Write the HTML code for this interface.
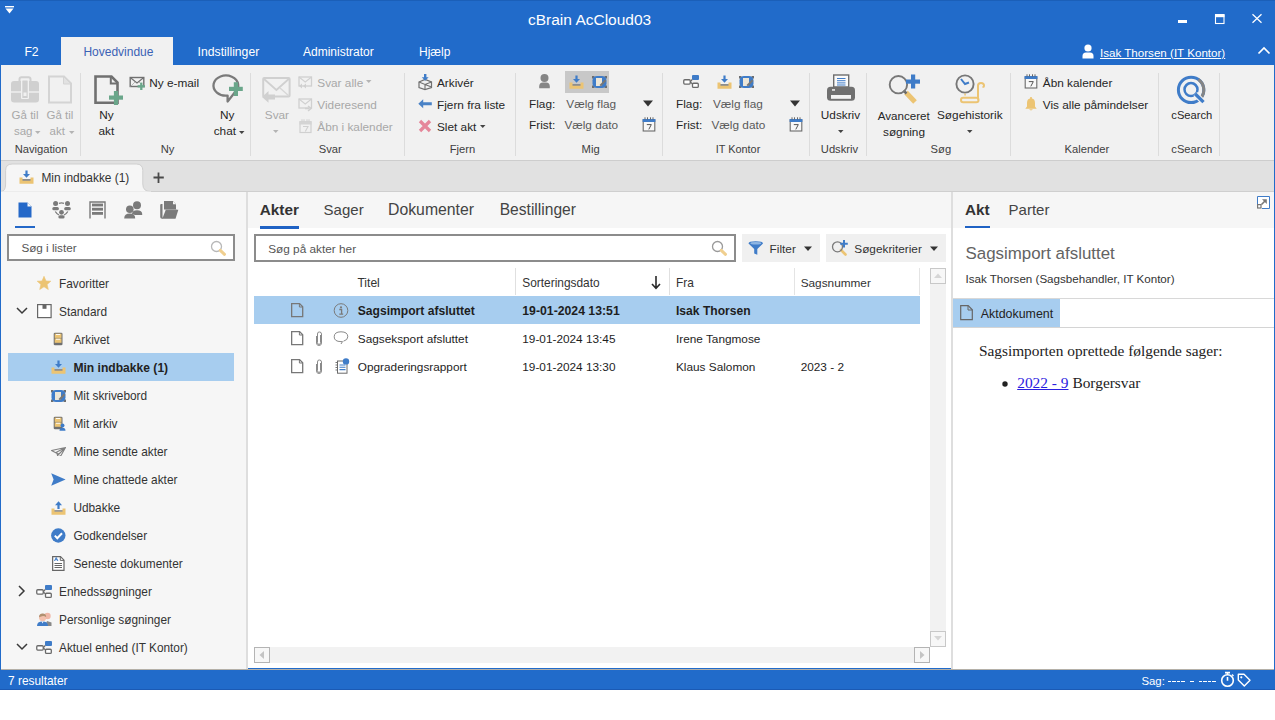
<!DOCTYPE html>
<html><head><meta charset="utf-8"><style>
html,body{margin:0;padding:0;width:1275px;height:720px;overflow:hidden;background:#fff;}
body{position:relative;font-family:"Liberation Sans", sans-serif;}
.a{position:absolute;}
.t{white-space:nowrap;line-height:normal;}
svg.a{overflow:visible;}
</style></head><body>
<div class="a" style="left:0px;top:0px;width:1275px;height:720px;background:#ffffff;"></div>
<div class="a" style="left:0px;top:0px;width:1275px;height:690px;background:#216bca;"></div>
<div class="a" style="left:0px;top:0px;width:1275px;height:1px;background:#1b5fb8;"></div>
<svg class="a" style="left:5px;top:6px;" width="9" height="8" viewBox="0 0 9 8"><rect x="0" y="0" width="9" height="1.4" fill="#fff"/><path d="M0.5 2.6 L8.5 2.6 L4.5 7.5 Z" fill="#fff"/></svg>
<div class="a t" style="left:528px;top:11px;font-size:15.5px;color:#ffffff;font-family:'Liberation Sans', sans-serif;">cBrain AcCloud03</div>
<div class="a" style="left:1178px;top:20px;width:9px;height:3px;background:#fff;"></div>
<svg class="a" style="left:1214px;top:13px;" width="11" height="11" viewBox="0 0 11 11"><rect x="1.5" y="2" width="8.5" height="8.5" fill="none" stroke="#fff" stroke-width="1.1"/><rect x="1" y="1" width="9.5" height="3.2" fill="#fff"/></svg>
<svg class="a" style="left:1251px;top:13px;" width="12" height="11" viewBox="0 0 12 11"><path d="M1.5 1.2 L10.5 9.8 M10.5 1.2 L1.5 9.8" stroke="#fff" stroke-width="1.25"/></svg>
<div class="a t" style="left:24.4px;top:45px;font-size:12.2px;color:#ffffff;font-family:'Liberation Sans', sans-serif;">F2</div>
<div class="a" style="left:61px;top:37px;width:112px;height:28px;background:#f1f1f1;"></div>
<div class="a t" style="left:83.4px;top:45px;font-size:12px;color:#3b62b5;font-family:'Liberation Sans', sans-serif;">Hovedvindue</div>
<div class="a t" style="left:197.6px;top:45px;font-size:12.2px;color:#ffffff;font-family:'Liberation Sans', sans-serif;">Indstillinger</div>
<div class="a t" style="left:303px;top:45px;font-size:12px;color:#ffffff;font-family:'Liberation Sans', sans-serif;">Administrator</div>
<div class="a t" style="left:419px;top:45px;font-size:12px;color:#ffffff;font-family:'Liberation Sans', sans-serif;">Hjælp</div>
<svg class="a" style="left:1082px;top:44px;" width="12" height="15" viewBox="0 0 12 15"><circle cx="6" cy="4" r="3.6" fill="#fff"/><path d="M0.5 14.5 L0.5 12 Q0.5 8.5 4 8.5 L8 8.5 Q11.5 8.5 11.5 12 L11.5 14.5 Z" fill="#fff"/></svg>
<div class="a t" style="left:1100px;top:46px;font-size:11.6px;color:#ffffff;font-family:'Liberation Sans', sans-serif;text-decoration:underline;text-underline-offset:1px;">Isak Thorsen (IT Kontor)</div>
<svg class="a" style="left:1257px;top:46px;" width="14" height="9" viewBox="0 0 14 9"><path d="M1.5 7.5 L7 2 L12.5 7.5" fill="none" stroke="#fff" stroke-width="1.7"/></svg>
<div class="a" style="left:1px;top:65px;width:1273px;height:95px;background:#f1f1f1;"></div>
<div class="a" style="left:1px;top:160px;width:1273px;height:1px;background:#cdcdcd;"></div>
<div class="a" style="left:80px;top:73px;width:1px;height:83px;background:#dcdcdc;"></div>
<div class="a" style="left:250px;top:73px;width:1px;height:83px;background:#dcdcdc;"></div>
<div class="a" style="left:404px;top:73px;width:1px;height:83px;background:#dcdcdc;"></div>
<div class="a" style="left:515px;top:73px;width:1px;height:83px;background:#dcdcdc;"></div>
<div class="a" style="left:662px;top:73px;width:1px;height:83px;background:#dcdcdc;"></div>
<div class="a" style="left:809px;top:73px;width:1px;height:83px;background:#dcdcdc;"></div>
<div class="a" style="left:866px;top:73px;width:1px;height:83px;background:#dcdcdc;"></div>
<div class="a" style="left:1010px;top:73px;width:1px;height:83px;background:#dcdcdc;"></div>
<div class="a" style="left:1158px;top:73px;width:1px;height:83px;background:#dcdcdc;"></div>
<div class="a" style="left:1219px;top:73px;width:1px;height:83px;background:#dcdcdc;"></div>
<svg class="a" style="left:10px;top:76px;" width="30" height="28" viewBox="0 0 30 28"><rect x="1" y="5" width="28" height="21.5" rx="3" fill="#d0d0d0"/><rect x="9.5" y="1.2" width="11" height="6" rx="2" fill="none" stroke="#d0d0d0" stroke-width="2"/><rect x="1" y="15.3" width="28" height="1.4" fill="#f1f1f1"/><rect x="11" y="3.5" width="8" height="19.5" rx="1" fill="#f1f1f1"/><rect x="12.3" y="4.5" width="5.4" height="17.5" rx="0.5" fill="#d0d0d0"/><rect x="13.5" y="16.5" width="3" height="3.5" fill="#f1f1f1"/></svg>
<svg class="a" style="left:47px;top:75px;" width="26" height="29" viewBox="0 0 26 29"><path d="M2 1.5 L17 1.5 L24 8.5 L24 27.5 L2 27.5 Z" fill="none" stroke="#d4d4d4" stroke-width="2"/><path d="M16.5 1.5 L16.5 9 L24 9 Z" fill="#e2e2e2" stroke="#d4d4d4" stroke-width="1"/></svg>
<div class="a t" style="left:11.6px;top:109px;font-size:11.5px;color:#a8a8a8;font-family:'Liberation Sans', sans-serif;">Gå til</div>
<div class="a t" style="left:13.9px;top:125px;font-size:11.5px;color:#a8a8a8;font-family:'Liberation Sans', sans-serif;">sag</div>
<svg class="a" style="left:34.5px;top:131px;" width="6" height="4" viewBox="0 0 6 4"><path d="M0 0 L5.5 0 L2.75 3 Z" fill="#b4b4b4"/></svg>
<div class="a t" style="left:46.5px;top:109px;font-size:11.5px;color:#a8a8a8;font-family:'Liberation Sans', sans-serif;">Gå til</div>
<div class="a t" style="left:49.5px;top:125px;font-size:11.5px;color:#a8a8a8;font-family:'Liberation Sans', sans-serif;">akt</div>
<svg class="a" style="left:68.5px;top:131px;" width="6" height="4" viewBox="0 0 6 4"><path d="M0 0 L5.5 0 L2.75 3 Z" fill="#b4b4b4"/></svg>
<div class="a t" style="left:14.7px;top:143px;font-size:11.2px;color:#404040;font-family:'Liberation Sans', sans-serif;">Navigation</div>
<svg class="a" style="left:94px;top:75px;" width="30" height="31" viewBox="0 0 30 31"><path d="M1.5 1.5 L17.5 1.5 L23.5 7.5 L23.5 27.7 L1.5 27.7 Z" fill="none" stroke="#707070" stroke-width="2.6"/><path d="M16.8 1.5 L16.8 8.5 L23.5 8.5" fill="none" stroke="#707070" stroke-width="2"/><rect x="15" y="20.5" width="14" height="4.2" fill="#6aa68a"/><rect x="19.9" y="16" width="4.2" height="14" fill="#6aa68a"/></svg>
<div class="a t" style="left:99.3px;top:108px;font-size:11.8px;color:#262626;font-family:'Liberation Sans', sans-serif;">Ny</div>
<div class="a t" style="left:98.5px;top:124px;font-size:11.8px;color:#262626;font-family:'Liberation Sans', sans-serif;">akt</div>
<svg class="a" style="left:129px;top:76px;" width="17" height="14" viewBox="0 0 17 14"><rect x="1.2" y="1.5" width="13.6" height="9" fill="none" stroke="#707070" stroke-width="1.4"/><path d="M1.2 1.5 L8 7 L14.8 1.5" fill="none" stroke="#707070" stroke-width="1.1"/><path d="M1.5 10.5 L6 6 M14.5 10.5 L10 6" stroke="#aaa" stroke-width="0.8"/><rect x="8.6" y="9.2" width="7.4" height="2.3" fill="#6aa68a"/><rect x="11.15" y="6.6" width="2.3" height="7.4" fill="#6aa68a"/></svg>
<div class="a t" style="left:149.3px;top:76px;font-size:11.8px;color:#262626;font-family:'Liberation Sans', sans-serif;">Ny e-mail</div>
<svg class="a" style="left:212px;top:74px;" width="32" height="29" viewBox="0 0 32 29"><path d="M22.3 19 A12.4 10.1 0 1 0 15.6 21.6 L15.6 27.6 Z" fill="none" stroke="#7a7a7a" stroke-width="2.3" stroke-linejoin="round"/><rect x="17" y="12.8" width="13.8" height="4.2" fill="#6aa68a"/><rect x="21.8" y="8.2" width="4.2" height="13.8" fill="#6aa68a"/></svg>
<div class="a t" style="left:220px;top:108px;font-size:11.8px;color:#262626;font-family:'Liberation Sans', sans-serif;">Ny</div>
<div class="a t" style="left:213.7px;top:124px;font-size:11.8px;color:#262626;font-family:'Liberation Sans', sans-serif;">chat</div>
<svg class="a" style="left:238.5px;top:131px;" width="6" height="4" viewBox="0 0 6 4"><path d="M0 0 L5.5 0 L2.75 3 Z" fill="#444"/></svg>
<div class="a t" style="left:160.7px;top:143px;font-size:11.2px;color:#404040;font-family:'Liberation Sans', sans-serif;">Ny</div>
<svg class="a" style="left:261px;top:76px;" width="31" height="28" viewBox="0 0 31 28"><rect x="2.2" y="2" width="26.4" height="18.4" rx="1" fill="none" stroke="#d0d0d0" stroke-width="2"/><path d="M2.5 2.5 L15.4 14 L28.3 2.5" fill="none" stroke="#d0d0d0" stroke-width="1.8"/><path d="M28 20 L19 12" stroke="#d6d6d6" stroke-width="1.3"/><path d="M1 21 L7.5 15 L7.5 18.5 L14 18.5 L14 23.5 L7.5 23.5 L7.5 26.8 Z" fill="#d0d0d0"/></svg>
<div class="a t" style="left:264.8px;top:108px;font-size:11.8px;color:#a8a8a8;font-family:'Liberation Sans', sans-serif;">Svar</div>
<svg class="a" style="left:273px;top:130px;" width="6" height="4" viewBox="0 0 6 4"><path d="M0 0 L5.5 0 L2.75 3 Z" fill="#b4b4b4"/></svg>
<svg class="a" style="left:298px;top:76px;" width="14" height="14" viewBox="0 0 14 14"><rect x="1" y="1" width="12.5" height="9" fill="none" stroke="#d0d0d0" stroke-width="1.3"/><path d="M1 1 L7.25 6 L13.5 1" fill="none" stroke="#d0d0d0" stroke-width="1.1"/><path d="M1 10 L4 7.5 L4 12.5 Z M5 10 L8 7.5 L8 12.5Z" fill="#d0d0d0"/></svg>
<div class="a t" style="left:317.3px;top:76px;font-size:11.8px;color:#a8a8a8;font-family:'Liberation Sans', sans-serif;">Svar alle</div>
<svg class="a" style="left:365.5px;top:80px;" width="6" height="4" viewBox="0 0 6 4"><path d="M0 0 L5.5 0 L2.75 3 Z" fill="#b4b4b4"/></svg>
<svg class="a" style="left:298px;top:98px;" width="14" height="14" viewBox="0 0 14 14"><rect x="1" y="1" width="12.5" height="9" fill="none" stroke="#d0d0d0" stroke-width="1.3"/><path d="M1 1 L7.25 6 L13.5 1" fill="none" stroke="#d0d0d0" stroke-width="1.1"/><path d="M7 10.5 L11 10.5 M10 8 L13 10.5 L10 13" fill="none" stroke="#d0d0d0" stroke-width="1.5"/></svg>
<div class="a t" style="left:317.3px;top:98px;font-size:11.8px;color:#a8a8a8;font-family:'Liberation Sans', sans-serif;">Videresend</div>
<svg class="a" style="left:299px;top:119px;" width="13" height="14" viewBox="0 0 13 14"><rect x="1" y="3" width="11" height="10.5" fill="none" stroke="#d0d0d0" stroke-width="1.2"/><rect x="0.5" y="2" width="12" height="3.5" fill="#d4d4d4"/><path d="M3 0.3 L3 2.8 M5 0.3 L5 2.8 M8 0.3 L8 2.8 M10 0.3 L10 2.8" stroke="#d0d0d0" stroke-width="1.1"/><path d="M4 7.5 L9 7.5 L6.3 12.5" fill="none" stroke="#d0d0d0" stroke-width="1.1"/></svg>
<div class="a t" style="left:317.3px;top:120px;font-size:11.8px;color:#a8a8a8;font-family:'Liberation Sans', sans-serif;">Åbn i kalender</div>
<div class="a t" style="left:318.8px;top:143px;font-size:11.2px;color:#404040;font-family:'Liberation Sans', sans-serif;">Svar</div>
<svg class="a" style="left:418px;top:74px;" width="15" height="16" viewBox="0 0 15 16"><path d="M1 8 L7 5.5 L13.5 8 L13.5 13.5 L7 15.5 L1 13.5 Z" fill="none" stroke="#707070" stroke-width="1.2"/><path d="M1 8 L7 10.5 L13.5 8 M7 10.5 L7 15.5 M7 10.5 L13.5 13" fill="none" stroke="#707070" stroke-width="1.1"/><rect x="6" y="0" width="2.4" height="4.5" fill="#3f7cc8"/><path d="M3.8 3.2 L10.6 3.2 L7.2 6.8 Z" fill="#3f7cc8"/></svg>
<div class="a t" style="left:437px;top:76px;font-size:11.8px;color:#262626;font-family:'Liberation Sans', sans-serif;">Arkivér</div>
<svg class="a" style="left:418px;top:99px;" width="14" height="10" viewBox="0 0 14 10"><path d="M0.3 4.7 L5.2 0.2 L5.2 3.2 L13.8 3.2 L13.8 6.3 L5.2 6.3 L5.2 9.3 Z" fill="#4a82c6"/></svg>
<div class="a t" style="left:437px;top:98px;font-size:11.8px;color:#262626;font-family:'Liberation Sans', sans-serif;">Fjern fra liste</div>
<svg class="a" style="left:418px;top:119px;" width="14" height="14" viewBox="0 0 14 14"><path d="M2 2 L12 12 M12 2 L2 12" stroke="#e5879a" stroke-width="3.3"/></svg>
<div class="a t" style="left:437px;top:120px;font-size:11.8px;color:#262626;font-family:'Liberation Sans', sans-serif;">Slet akt</div>
<svg class="a" style="left:480px;top:125px;" width="6" height="4" viewBox="0 0 6 4"><path d="M0 0 L5.5 0 L2.75 3 Z" fill="#444"/></svg>
<div class="a t" style="left:449.7px;top:143px;font-size:11.2px;color:#404040;font-family:'Liberation Sans', sans-serif;">Fjern</div>
<svg class="a" style="left:539px;top:74px;" width="11" height="15" viewBox="0 0 11 15"><circle cx="5.5" cy="4.1" r="4" fill="#858585"/><path d="M0.2 14.2 L0.2 12.5 Q0.2 8.6 4 8.6 L7 8.6 Q10.8 8.6 10.8 12.5 L10.8 14.2 Z" fill="#858585"/></svg>
<div class="a" style="left:565px;top:71px;width:44px;height:22px;background:#c8c8c8;"></div>
<svg class="a" style="left:569px;top:75px;" width="15" height="14" viewBox="0 0 15 14"><path d="M0.5 7.5 L3.5 7.5 L3.5 9 L11.5 9 L11.5 7.5 L14.5 7.5 L14.5 13.8 L0.5 13.8 Z" fill="#ecc473"/><rect x="3.5" y="9" width="8" height="1.8" fill="#8e8e8e"/><rect x="6.4" y="0.5" width="2.2" height="5" fill="#3f7cc8"/><path d="M4 4 L11 4 L7.5 7.8 Z" fill="#3f7cc8"/></svg>
<svg class="a" style="left:592px;top:75px;" width="15" height="14" viewBox="0 0 15 14"><rect x="0" y="1" width="2.5" height="2.5" fill="#6e6e6e"/><rect x="12.5" y="1" width="2.5" height="2.5" fill="#6e6e6e"/><rect x="0" y="10.5" width="2.5" height="2.5" fill="#6e6e6e"/><rect x="12.5" y="10.5" width="2.5" height="2.5" fill="#6e6e6e"/><rect x="0.5" y="1" width="14" height="12" rx="4.5" fill="#3f7cc8"/><rect x="4" y="3" width="6" height="8" fill="#ece6d8"/><path d="M8.3 10.8 L13.6 5.2" stroke="#777" stroke-width="2"/></svg>
<div class="a t" style="left:529px;top:97px;font-size:11.8px;color:#262626;font-family:'Liberation Sans', sans-serif;">Flag:</div>
<div class="a t" style="left:566.3px;top:97px;font-size:11.8px;color:#595959;font-family:'Liberation Sans', sans-serif;">Vælg flag</div>
<svg class="a" style="left:643px;top:100px;" width="10" height="7" viewBox="0 0 10 7"><path d="M0 0.5 L10 0.5 L5 6.5 Z" fill="#333"/></svg>
<div class="a t" style="left:529px;top:118px;font-size:11.8px;color:#262626;font-family:'Liberation Sans', sans-serif;">Frist:</div>
<div class="a t" style="left:564.4px;top:118px;font-size:11.8px;color:#595959;font-family:'Liberation Sans', sans-serif;">Vælg dato</div>
<svg class="a" style="left:642px;top:117px;" width="14" height="15" viewBox="0 0 14 15"><rect x="1.2" y="3" width="11.6" height="11" fill="#f8f8f8" stroke="#6b6b6b" stroke-width="1.1"/><rect x="0.6" y="2" width="12.8" height="3" fill="#3f7cc8"/><path d="M3 0.3 L3 2.6 M5.5 0.3 L5.5 2.6 M8.5 0.3 L8.5 2.6 M11 0.3 L11 2.6" stroke="#666" stroke-width="1"/><path d="M4.8 7.6 L9.3 7.6 L6.8 12.4" fill="none" stroke="#555" stroke-width="1"/></svg>
<div class="a t" style="left:581.6px;top:143px;font-size:11.2px;color:#404040;font-family:'Liberation Sans', sans-serif;">Mig</div>
<svg class="a" style="left:683px;top:75px;" width="16" height="13" viewBox="0 0 16 13"><rect x="0.75" y="4.75" width="6.5" height="4.3" rx="1" fill="#fff" stroke="#6a6a6a" stroke-width="1.3"/><rect x="9" y="0" width="7" height="5" rx="1" fill="#3f7cc8"/><rect x="9.5" y="8.25" width="5.8" height="4.2" rx="1" fill="#fff" stroke="#6a6a6a" stroke-width="1.3"/><path d="M7.3 6.9 L9.3 4.3 M7.3 6.9 L9.8 9.3" stroke="#6a6a6a" stroke-width="1.2"/></svg>
<svg class="a" style="left:717px;top:75px;" width="15" height="14" viewBox="0 0 15 14"><path d="M0.5 7.5 L3.5 7.5 L3.5 9 L11.5 9 L11.5 7.5 L14.5 7.5 L14.5 13.8 L0.5 13.8 Z" fill="#ecc473"/><rect x="3.5" y="9" width="8" height="1.8" fill="#8e8e8e"/><rect x="6.4" y="0.5" width="2.2" height="5" fill="#3f7cc8"/><path d="M4 4 L11 4 L7.5 7.8 Z" fill="#3f7cc8"/></svg>
<svg class="a" style="left:739px;top:75px;" width="15" height="14" viewBox="0 0 15 14"><rect x="0" y="1" width="2.5" height="2.5" fill="#6e6e6e"/><rect x="12.5" y="1" width="2.5" height="2.5" fill="#6e6e6e"/><rect x="0" y="10.5" width="2.5" height="2.5" fill="#6e6e6e"/><rect x="12.5" y="10.5" width="2.5" height="2.5" fill="#6e6e6e"/><rect x="0.5" y="1" width="14" height="12" rx="4.5" fill="#3f7cc8"/><rect x="4" y="3" width="6" height="8" fill="#ece6d8"/><path d="M8.3 10.8 L13.6 5.2" stroke="#777" stroke-width="2"/></svg>
<div class="a t" style="left:676px;top:97px;font-size:11.8px;color:#262626;font-family:'Liberation Sans', sans-serif;">Flag:</div>
<div class="a t" style="left:713px;top:97px;font-size:11.8px;color:#595959;font-family:'Liberation Sans', sans-serif;">Vælg flag</div>
<svg class="a" style="left:790px;top:100px;" width="10" height="7" viewBox="0 0 10 7"><path d="M0 0.5 L10 0.5 L5 6.5 Z" fill="#333"/></svg>
<div class="a t" style="left:676px;top:118px;font-size:11.8px;color:#262626;font-family:'Liberation Sans', sans-serif;">Frist:</div>
<div class="a t" style="left:711.5px;top:118px;font-size:11.8px;color:#595959;font-family:'Liberation Sans', sans-serif;">Vælg dato</div>
<svg class="a" style="left:789px;top:117px;" width="14" height="15" viewBox="0 0 14 15"><rect x="1.2" y="3" width="11.6" height="11" fill="#f8f8f8" stroke="#6b6b6b" stroke-width="1.1"/><rect x="0.6" y="2" width="12.8" height="3" fill="#3f7cc8"/><path d="M3 0.3 L3 2.6 M5.5 0.3 L5.5 2.6 M8.5 0.3 L8.5 2.6 M11 0.3 L11 2.6" stroke="#666" stroke-width="1"/><path d="M4.8 7.6 L9.3 7.6 L6.8 12.4" fill="none" stroke="#555" stroke-width="1"/></svg>
<div class="a t" style="left:715.7px;top:143px;font-size:10.9px;color:#404040;font-family:'Liberation Sans', sans-serif;">IT Kontor</div>
<svg class="a" style="left:827px;top:74px;" width="29" height="28" viewBox="0 0 29 28"><rect x="6.7" y="1" width="15" height="12" fill="#fafafa" stroke="#6e6e6e" stroke-width="1.4"/><path d="M10 4.5 L18.5 4.5 M10 6.7 L18.5 6.7 M10 8.9 L18.5 8.9 M10 11 L18.5 11" stroke="#3f7cc8" stroke-width="1"/><rect x="0" y="12.8" width="28" height="14" rx="3.5" fill="#707070"/><rect x="4" y="21" width="20" height="3.8" fill="#f4f4f4"/><rect x="5" y="15.2" width="3" height="1.5" fill="#f4f4f4"/></svg>
<div class="a t" style="left:820.8px;top:108px;font-size:11.8px;color:#262626;font-family:'Liberation Sans', sans-serif;">Udskriv</div>
<svg class="a" style="left:837.5px;top:130px;" width="6" height="4" viewBox="0 0 6 4"><path d="M0 0 L5.5 0 L2.75 3 Z" fill="#444"/></svg>
<div class="a t" style="left:820.8px;top:143px;font-size:11.2px;color:#404040;font-family:'Liberation Sans', sans-serif;">Udskriv</div>
<svg class="a" style="left:888px;top:74px;" width="33" height="31" viewBox="0 0 33 31"><path d="M18 18.5 L27 28" stroke="#ecc473" stroke-width="5"/><path d="M15.5 16.5 L18.5 19.5" stroke="#6a6a6a" stroke-width="2.5"/><circle cx="10.4" cy="10.7" r="8.7" fill="none" stroke="#777" stroke-width="1.9"/><rect x="18" y="5.5" width="14" height="4.2" fill="#3f7cc8"/><rect x="23" y="0.5" width="4.2" height="14" fill="#3f7cc8"/></svg>
<div class="a t" style="left:877.8px;top:109px;font-size:11.6px;color:#262626;font-family:'Liberation Sans', sans-serif;">Avanceret</div>
<div class="a t" style="left:883px;top:125px;font-size:11.8px;color:#262626;font-family:'Liberation Sans', sans-serif;">søgning</div>
<svg class="a" style="left:955px;top:74px;" width="31" height="30" viewBox="0 0 31 30"><path d="M23 11.5 L23 25.5 M23 11.5 Q23 9 26 9 Q29 9 29 11.5 Q29 13 27.5 13" fill="none" stroke="#ecc473" stroke-width="2"/><rect x="6" y="23.8" width="17.5" height="4.5" rx="2.2" fill="none" stroke="#ecc473" stroke-width="2"/><circle cx="10" cy="10" r="8.6" fill="#f1f1f1" stroke="#777" stroke-width="1.9"/><path d="M6 5 L10 10 L14 8.5" fill="none" stroke="#3f7cc8" stroke-width="2"/><rect x="9.3" y="19.5" width="1.5" height="2" fill="#ecc473"/></svg>
<div class="a t" style="left:937px;top:108px;font-size:11.8px;color:#262626;font-family:'Liberation Sans', sans-serif;">Søgehistorik</div>
<svg class="a" style="left:966.5px;top:130px;" width="6" height="4" viewBox="0 0 6 4"><path d="M0 0 L5.5 0 L2.75 3 Z" fill="#444"/></svg>
<div class="a t" style="left:930.6px;top:143px;font-size:11.2px;color:#404040;font-family:'Liberation Sans', sans-serif;">Søg</div>
<svg class="a" style="left:1024px;top:74px;" width="14" height="15" viewBox="0 0 14 15"><rect x="1.2" y="3" width="11.6" height="11" fill="#f8f8f8" stroke="#6b6b6b" stroke-width="1.1"/><rect x="0.6" y="2" width="12.8" height="3" fill="#3f7cc8"/><path d="M3 0.3 L3 2.6 M5.5 0.3 L5.5 2.6 M8.5 0.3 L8.5 2.6 M11 0.3 L11 2.6" stroke="#666" stroke-width="1"/><path d="M4.8 7.6 L9.3 7.6 L6.8 12.4" fill="none" stroke="#555" stroke-width="1"/></svg>
<svg class="a" style="left:1025px;top:97px;" width="12" height="14" viewBox="0 0 12 14"><path d="M6 1.2 Q2 1.5 2 6 L2 9.5 L0.3 11.8 L11.7 11.8 L10 9.5 L10 6 Q10 1.5 6 1.2 Z" fill="#ecc473"/><rect x="5.2" y="0" width="1.6" height="2" fill="#ecc473"/><path d="M4 12.3 Q6 14.5 8 12.3 Z" fill="#ecc473"/></svg>
<div class="a t" style="left:1042.8px;top:76px;font-size:11.8px;color:#262626;font-family:'Liberation Sans', sans-serif;">Åbn kalender</div>
<div class="a t" style="left:1042.8px;top:98px;font-size:11.8px;color:#262626;font-family:'Liberation Sans', sans-serif;">Vis alle påmindelser</div>
<div class="a t" style="left:1064.5px;top:143px;font-size:11.2px;color:#404040;font-family:'Liberation Sans', sans-serif;">Kalender</div>
<svg class="a" style="left:1175px;top:74px;" width="32" height="31" viewBox="0 0 32 31"><circle cx="16.1" cy="15.9" r="12.7" fill="none" stroke="#3f7cc8" stroke-width="3"/><path d="M23.4 5.5 A12.7 12.7 0 0 1 25.8 24.1" fill="none" stroke="#858585" stroke-width="3"/><circle cx="16" cy="15.6" r="6.5" fill="none" stroke="#3f7cc8" stroke-width="2.5"/><path d="M20.3 20 L28.5 28.2" stroke="#f1f1f1" stroke-width="5.5"/><path d="M20.3 20 L28.5 28.2" stroke="#3f7cc8" stroke-width="3.3"/></svg>
<div class="a t" style="left:1171.3px;top:109px;font-size:11.2px;color:#262626;font-family:'Liberation Sans', sans-serif;">cSearch</div>
<div class="a t" style="left:1171.3px;top:143px;font-size:11.2px;color:#404040;font-family:'Liberation Sans', sans-serif;">cSearch</div>
<div class="a" style="left:1px;top:161px;width:1273px;height:30px;background:#e1e1e1;"></div>
<div class="a" style="left:1px;top:191px;width:1273px;height:1px;background:#cfcfcf;"></div>
<svg class="a" style="left:3px;top:163px;" width="150" height="29" viewBox="0 0 150 29"><path d="M-2 28.5 Q2.6 28.5 2.6 21 L2.6 7.5 Q2.6 1 9.1 1 L133.3 1 Q139.8 1 139.8 7.5 L139.8 21 Q139.8 28.5 147.5 28.5" fill="#f6f6f6" stroke="#cfcfcf" stroke-width="1"/><rect x="-2" y="28.5" width="150" height="1" fill="#f6f6f6"/></svg>
<svg class="a" style="left:19px;top:170px;" width="15" height="14" viewBox="0 0 15 14"><path d="M0.5 7.5 L3.5 7.5 L3.5 9 L11.5 9 L11.5 7.5 L14.5 7.5 L14.5 13.8 L0.5 13.8 Z" fill="#ecc473"/><rect x="3.5" y="9" width="8" height="1.8" fill="#8e8e8e"/><rect x="6.4" y="0.5" width="2.2" height="5" fill="#3f7cc8"/><path d="M4 4 L11 4 L7.5 7.8 Z" fill="#3f7cc8"/></svg>
<div class="a t" style="left:41.4px;top:171px;font-size:11.9px;color:#333;font-family:'Liberation Sans', sans-serif;">Min indbakke (1)</div>
<svg class="a" style="left:153px;top:172px;" width="12" height="12" viewBox="0 0 12 12"><path d="M5.5 0.5 L5.5 11 M0.5 5.5 L10.8 5.5" stroke="#4a4a4a" stroke-width="1.8"/></svg>
<div class="a" style="left:1px;top:192px;width:245px;height:477px;background:#f6f6f6;"></div>
<div class="a" style="left:246px;top:192px;width:2px;height:477px;background:#dedede;"></div>
<svg class="a" style="left:18px;top:202px;" width="14" height="16" viewBox="0 0 14 16"><path d="M0.5 0.5 L9.5 0.5 L13.5 4.5 L13.5 15.5 L0.5 15.5 Z" fill="#2468c8"/><path d="M9.5 0.5 L9.5 4.5 L13.5 4.5 Z" fill="#f6f6f6"/></svg>
<div class="a" style="left:15px;top:226px;width:20px;height:2.4px;background:#2468c8;"></div>
<svg class="a" style="left:52px;top:200px;" width="20" height="19" viewBox="0 0 20 19"><circle cx="3.6" cy="3.6" r="2.5" fill="#7a7a7a"/><rect x="0.3" y="7" width="6.6" height="3.3" rx="1.6" fill="#7a7a7a"/><circle cx="15.5" cy="3.6" r="2.5" fill="#7a7a7a"/><rect x="12.2" y="7" width="6.6" height="3.3" rx="1.6" fill="#7a7a7a"/><circle cx="9.5" cy="12.3" r="2.4" fill="#7a7a7a"/><rect x="6.4" y="15.2" width="6.2" height="3.4" rx="1.6" fill="#7a7a7a"/><path d="M7 3.4 Q9.5 2.4 12 3.4" fill="none" stroke="#7a7a7a" stroke-width="1.3"/><path d="M3.3 11.5 Q4.8 14 7 15 M15.8 11.5 Q14.3 14 12 15" fill="none" stroke="#7a7a7a" stroke-width="1.3"/></svg>
<svg class="a" style="left:89px;top:201px;" width="17" height="18" viewBox="0 0 17 18"><path d="M1 17.5 L1 1 L16 1 L16 17.5" fill="none" stroke="#7a7a7a" stroke-width="1.4"/><rect x="3" y="2.6" width="11" height="2.8" fill="#7a7a7a"/><rect x="3" y="6.8" width="11" height="2.8" fill="#7a7a7a"/><rect x="3" y="11" width="11" height="2.8" fill="#7a7a7a"/></svg>
<svg class="a" style="left:124px;top:201px;" width="19" height="18" viewBox="0 0 19 18"><circle cx="13" cy="4.2" r="4" fill="#7a7a7a"/><path d="M8 13 Q8 9.2 13 9.2 Q18.2 9.2 18.2 13 L18.2 14 L11 14 Z" fill="#7a7a7a"/><circle cx="5.8" cy="8.2" r="3.8" fill="#7a7a7a"/><path d="M0.2 17.5 Q0.2 12.5 5.8 12.5 Q11.2 12.5 11.2 17.5 Z" fill="#7a7a7a"/></svg>
<svg class="a" style="left:160px;top:201px;" width="19" height="18" viewBox="0 0 19 18"><path d="M2.5 3 L1.2 3 Q0.2 3 0.2 4 L0.2 16 Q0.2 17.7 2 17.7 L3 17.7 L2.5 15.5 Z" fill="#7a7a7a"/><path d="M4 0 L13 0 L16 3.2 L16 8.5 L4 8.5 Z" fill="#7a7a7a"/><path d="M13 0 L13 3.2 L16 3.2 Z" fill="#f6f6f6"/><path d="M5.8 8.7 L18.3 8.7 L15.5 17.7 L2.3 17.7 Z" fill="#7a7a7a"/><path d="M5.5 8.7 L16.5 8.7" stroke="#9a9a9a" stroke-width="0.8"/></svg>
<div class="a" style="left:7px;top:234px;width:228px;height:27px;background:#ffffff;box-sizing:border-box;border:2px solid #8c8c8c;"></div>
<div class="a t" style="left:21.4px;top:241px;font-size:11.7px;color:#555;font-family:'Liberation Sans', sans-serif;">Søg i lister</div>
<svg class="a" style="left:210px;top:240px;" width="17" height="16" viewBox="0 0 17 16"><circle cx="6.5" cy="6.5" r="5" fill="none" stroke="#b8b8b8" stroke-width="1.3"/><path d="M10.3 10.3 L14.5 14.3" stroke="#f0cf8f" stroke-width="3" stroke-linecap="round"/></svg>
<div class="a" style="left:8px;top:353px;width:226px;height:28px;background:#a7cdef;"></div>
<svg class="a" style="left:36.8px;top:276px;" width="14" height="14" viewBox="0 0 14 14"><path d="M7 0.3 L9 5 L13.8 5.2 L10.1 8.4 L11.3 13.5 L7 10.8 L2.7 13.5 L3.9 8.4 L0.2 5.2 L5 5 Z" fill="#ecc473" stroke="#ecc473" stroke-width="0.6" stroke-linejoin="round"/></svg>
<div class="a t" style="left:59px;top:277px;font-size:11.85px;color:#333333;font-family:'Liberation Sans', sans-serif;">Favoritter</div>
<svg class="a" style="left:36.6px;top:304px;" width="15" height="14" viewBox="0 0 15 14"><rect x="0.6" y="0.6" width="13.5" height="13" fill="#fff" stroke="#666" stroke-width="1.2"/><rect x="5.5" y="0.6" width="4" height="4.2" fill="#666"/></svg>
<div class="a t" style="left:59px;top:305px;font-size:11.85px;color:#333333;font-family:'Liberation Sans', sans-serif;">Standard</div>
<svg class="a" style="left:16px;top:307px;" width="12" height="8" viewBox="0 0 12 8"><path d="M1 1 L6 6 L11 1" fill="none" stroke="#3a3a3a" stroke-width="1.5"/></svg>
<svg class="a" style="left:53px;top:332px;" width="10" height="14" viewBox="0 0 10 14"><rect x="0.7" y="0.7" width="8.8" height="12.6" rx="1.3" fill="#707070"/><rect x="1.7" y="1.7" width="6.8" height="4.2" fill="#ecc473"/><rect x="1.7" y="6.4" width="6.8" height="4.4" fill="#ecc473"/><rect x="3" y="2.1" width="4.2" height="0.9" fill="#fff"/><rect x="3" y="6.8" width="4.2" height="0.9" fill="#fff"/></svg>
<div class="a t" style="left:73.4px;top:333px;font-size:11.85px;color:#333333;font-family:'Liberation Sans', sans-serif;">Arkivet</div>
<svg class="a" style="left:51px;top:360px;" width="15" height="14" viewBox="0 0 15 14"><path d="M0.5 7.5 L3.5 7.5 L3.5 9 L11.5 9 L11.5 7.5 L14.5 7.5 L14.5 13.8 L0.5 13.8 Z" fill="#ecc473"/><rect x="3.5" y="9" width="8" height="1.8" fill="#8e8e8e"/><rect x="6.4" y="0.5" width="2.2" height="5" fill="#3f7cc8"/><path d="M4 4 L11 4 L7.5 7.8 Z" fill="#3f7cc8"/></svg>
<div class="a t" style="left:73.4px;top:361px;font-size:12.1px;color:#222;font-family:'Liberation Sans', sans-serif;font-weight:bold;">Min indbakke (1)</div>
<svg class="a" style="left:51px;top:389px;" width="15" height="14" viewBox="0 0 15 14"><rect x="0" y="1" width="2.5" height="2.5" fill="#6e6e6e"/><rect x="12.5" y="1" width="2.5" height="2.5" fill="#6e6e6e"/><rect x="0" y="10.5" width="2.5" height="2.5" fill="#6e6e6e"/><rect x="12.5" y="10.5" width="2.5" height="2.5" fill="#6e6e6e"/><rect x="0.5" y="1" width="14" height="12" rx="4.5" fill="#3f7cc8"/><rect x="4" y="3" width="6" height="8" fill="#ece6d8"/><path d="M8.3 10.8 L13.6 5.2" stroke="#777" stroke-width="2"/></svg>
<div class="a t" style="left:73.4px;top:389px;font-size:11.85px;color:#333333;font-family:'Liberation Sans', sans-serif;">Mit skrivebord</div>
<svg class="a" style="left:53px;top:416px;" width="13" height="15" viewBox="0 0 13 15"><rect x="0.7" y="0.7" width="8.8" height="12.6" rx="1.3" fill="#707070"/><rect x="1.7" y="1.7" width="6.8" height="4.2" fill="#ecc473"/><rect x="1.7" y="6.4" width="6.8" height="4.4" fill="#ecc473"/><rect x="3" y="2.1" width="4.2" height="0.9" fill="#fff"/><rect x="3" y="6.8" width="4.2" height="0.9" fill="#fff"/><circle cx="9.5" cy="9.5" r="2" fill="#3f7cc8"/><path d="M6.5 14.8 Q6.5 11.8 9.5 11.8 Q12.5 11.8 12.5 14.8 Z" fill="#3f7cc8"/></svg>
<div class="a t" style="left:73.4px;top:417px;font-size:11.85px;color:#333333;font-family:'Liberation Sans', sans-serif;">Mit arkiv</div>
<svg class="a" style="left:51px;top:447px;" width="15" height="9" viewBox="0 0 15 9"><path d="M0.5 3.5 L14.5 0.5 L10 8.5 Z M4.5 5.8 L14.5 0.5 L6.5 8.5 L5.8 5.5" fill="none" stroke="#808080" stroke-width="1.1" stroke-linejoin="round"/></svg>
<div class="a t" style="left:73.4px;top:445px;font-size:11.85px;color:#333333;font-family:'Liberation Sans', sans-serif;">Mine sendte akter</div>
<svg class="a" style="left:51px;top:473px;" width="15" height="13" viewBox="0 0 15 13"><path d="M0.2 0.3 L14.6 6.5 L0.2 12.8 L2.6 6.5 Z" fill="#3f7cc8"/></svg>
<div class="a t" style="left:73.4px;top:473px;font-size:11.85px;color:#333333;font-family:'Liberation Sans', sans-serif;">Mine chattede akter</div>
<svg class="a" style="left:51px;top:501px;" width="15" height="14" viewBox="0 0 15 14"><path d="M0.5 7.5 L3.5 7.5 L3.5 9 L11.5 9 L11.5 7.5 L14.5 7.5 L14.5 13.8 L0.5 13.8 Z" fill="#ecc473"/><rect x="3.5" y="9" width="8" height="1.8" fill="#9a9a9a"/><rect x="6.4" y="3.5" width="2.2" height="4.5" fill="#3f7cc8"/><path d="M4 4.3 L11 4.3 L7.5 0.3 Z" fill="#3f7cc8"/></svg>
<div class="a t" style="left:73.4px;top:501px;font-size:11.85px;color:#333333;font-family:'Liberation Sans', sans-serif;">Udbakke</div>
<svg class="a" style="left:51px;top:527.5px;" width="15" height="15" viewBox="0 0 15 15"><circle cx="7.3" cy="7.5" r="7.2" fill="#3f7cc8"/><path d="M3.8 7.6 L6.3 10.2 L11 5.2" fill="none" stroke="#fff" stroke-width="2"/></svg>
<div class="a t" style="left:73.4px;top:529px;font-size:11.85px;color:#333333;font-family:'Liberation Sans', sans-serif;">Godkendelser</div>
<svg class="a" style="left:52px;top:556px;" width="13" height="15" viewBox="0 0 13 15"><path d="M0.65 0.65 L8.5 0.65 L12 4.2 L12 14.4 L0.65 14.4 Z" fill="#fff" stroke="#666" stroke-width="1.2"/><path d="M8.3 0.65 L8.3 4.4 L12 4.4" fill="none" stroke="#666" stroke-width="1"/><path d="M2.5 5 L4.2 1.5 L5.9 5 M3.2 3.7 L5.2 3.7" fill="none" stroke="#3f7cc8" stroke-width="1"/><path d="M2.5 7.5 L10 7.5 M2.5 9.5 L10 9.5 M2.5 11.5 L10 11.5" stroke="#666" stroke-width="1"/></svg>
<div class="a t" style="left:73.4px;top:557px;font-size:11.85px;color:#333333;font-family:'Liberation Sans', sans-serif;">Seneste dokumenter</div>
<svg class="a" style="left:36px;top:584.5px;" width="16" height="13" viewBox="0 0 16 13"><rect x="0.75" y="4.75" width="6.5" height="4.3" rx="1" fill="#fff" stroke="#6a6a6a" stroke-width="1.3"/><rect x="9" y="0" width="7" height="5" rx="1" fill="#3f7cc8"/><rect x="9.5" y="8.25" width="5.8" height="4.2" rx="1" fill="#fff" stroke="#6a6a6a" stroke-width="1.3"/><path d="M7.3 6.9 L9.3 4.3 M7.3 6.9 L9.8 9.3" stroke="#6a6a6a" stroke-width="1.2"/></svg>
<div class="a t" style="left:59px;top:585px;font-size:11.85px;color:#333333;font-family:'Liberation Sans', sans-serif;">Enhedssøgninger</div>
<svg class="a" style="left:18px;top:585px;" width="8" height="12" viewBox="0 0 8 12"><path d="M1 1 L6 6 L1 11" fill="none" stroke="#3a3a3a" stroke-width="1.5"/></svg>
<svg class="a" style="left:37px;top:612px;" width="15" height="14" viewBox="0 0 15 14"><circle cx="10.5" cy="4" r="3.2" fill="#f0b8a8"/><path d="M8 14 L14.5 14 L14.5 10.5 L10 9 Z" fill="#888"/><circle cx="5.6" cy="5.6" r="3.6" fill="#f3c1ae"/><path d="M2 5.2 Q2.2 1.4 5.8 1.6 Q9.2 1.8 9.2 5.2 Q7 3.6 5 4.2 Q3.5 4.6 2 5.2 Z" fill="#b09070"/><path d="M0 14 Q0 9.6 5.6 9.6 Q11 9.6 11 14 Z" fill="#3f7cc8"/><path d="M4.7 9.6 L5.6 11.5 L6.5 9.6 Z" fill="#fff"/></svg>
<div class="a t" style="left:59px;top:613px;font-size:11.85px;color:#333333;font-family:'Liberation Sans', sans-serif;">Personlige søgninger</div>
<svg class="a" style="left:36px;top:641px;" width="16" height="13" viewBox="0 0 16 13"><rect x="0.75" y="4.75" width="6.5" height="4.3" rx="1" fill="#fff" stroke="#6a6a6a" stroke-width="1.3"/><rect x="9" y="0" width="7" height="5" rx="1" fill="#3f7cc8"/><rect x="9.5" y="8.25" width="5.8" height="4.2" rx="1" fill="#fff" stroke="#6a6a6a" stroke-width="1.3"/><path d="M7.3 6.9 L9.3 4.3 M7.3 6.9 L9.8 9.3" stroke="#6a6a6a" stroke-width="1.2"/></svg>
<div class="a t" style="left:59px;top:641px;font-size:11.85px;color:#333333;font-family:'Liberation Sans', sans-serif;">Aktuel enhed (IT Kontor)</div>
<svg class="a" style="left:16px;top:643px;" width="12" height="8" viewBox="0 0 12 8"><path d="M1 1 L6 6 L11 1" fill="none" stroke="#3a3a3a" stroke-width="1.5"/></svg>
<div class="a" style="left:248px;top:192px;width:703px;height:36px;background:#f6f6f6;"></div>
<div class="a" style="left:248px;top:228px;width:703px;height:440px;background:#ffffff;"></div>
<div class="a" style="left:951px;top:192px;width:2px;height:477px;background:#dedede;"></div>
<div class="a t" style="left:259.8px;top:201px;font-size:15.3px;color:#333;font-family:'Liberation Sans', sans-serif;font-weight:bold;">Akter</div>
<div class="a" style="left:260px;top:226px;width:39px;height:2.5px;background:#1f62c4;"></div>
<div class="a t" style="left:323.6px;top:201px;font-size:15.0px;color:#444;font-family:'Liberation Sans', sans-serif;">Sager</div>
<div class="a t" style="left:388px;top:201px;font-size:15.8px;color:#444;font-family:'Liberation Sans', sans-serif;">Dokumenter</div>
<div class="a t" style="left:499.7px;top:201px;font-size:15.6px;color:#444;font-family:'Liberation Sans', sans-serif;">Bestillinger</div>
<div class="a" style="left:254px;top:234px;width:482px;height:28px;background:#ffffff;box-sizing:border-box;border:2px solid #8c8c8c;"></div>
<div class="a t" style="left:268.2px;top:242px;font-size:11.8px;color:#555;font-family:'Liberation Sans', sans-serif;">Søg på akter her</div>
<svg class="a" style="left:711px;top:240px;" width="17" height="16" viewBox="0 0 17 16"><circle cx="6.5" cy="6.5" r="5" fill="none" stroke="#9a9a9a" stroke-width="1.3"/><path d="M10.3 10.3 L14.5 14.3" stroke="#f0cf8f" stroke-width="3" stroke-linecap="round"/></svg>
<div class="a" style="left:742px;top:234px;width:78px;height:28px;background:#f0f0f0;"></div>
<svg class="a" style="left:748px;top:241px;" width="16" height="14" viewBox="0 0 16 14"><path d="M0.5 2.5 Q0.5 0.3 7.75 0.3 Q15 0.3 15 2.5 L9.3 8 L9.3 13.8 L6.2 12.5 L6.2 8 Z" fill="#3f7cc8"/><ellipse cx="7.75" cy="2.3" rx="5.5" ry="1.2" fill="#8fb6e3"/></svg>
<div class="a t" style="left:769.6px;top:242px;font-size:11.8px;color:#333;font-family:'Liberation Sans', sans-serif;">Filter</div>
<svg class="a" style="left:804px;top:246px;" width="9" height="6" viewBox="0 0 9 6"><path d="M0 0.5 L8 0.5 L4 5 Z" fill="#333"/></svg>
<div class="a" style="left:826px;top:234px;width:120px;height:28px;background:#f0f0f0;"></div>
<svg class="a" style="left:831px;top:239px;" width="18" height="17" viewBox="0 0 18 17"><path d="M10 11 L14.5 15.5" stroke="#ecc473" stroke-width="2.6" stroke-linecap="round"/><circle cx="6.5" cy="7.8" r="5" fill="none" stroke="#7a7a7a" stroke-width="1.3"/><path d="M13 1 L13 8.6 M9.2 4.8 L16.8 4.8" stroke="#3f7cc8" stroke-width="2"/></svg>
<div class="a t" style="left:854.3px;top:242px;font-size:11.8px;color:#333;font-family:'Liberation Sans', sans-serif;">Søgekriterier</div>
<svg class="a" style="left:930px;top:246px;" width="9" height="6" viewBox="0 0 9 6"><path d="M0 0.5 L8 0.5 L4 5 Z" fill="#333"/></svg>
<div class="a t" style="left:357.4px;top:276px;font-size:12.1px;color:#333;font-family:'Liberation Sans', sans-serif;">Titel</div>
<div class="a" style="left:515px;top:268px;width:1px;height:27px;background:#e0e0e0;"></div>
<div class="a" style="left:669px;top:268px;width:1px;height:27px;background:#e0e0e0;"></div>
<div class="a" style="left:794px;top:268px;width:1px;height:27px;background:#e4e4e4;"></div>
<div class="a" style="left:919px;top:268px;width:1px;height:27px;background:#e4e4e4;"></div>
<div class="a t" style="left:522.3px;top:276px;font-size:11.9px;color:#333;font-family:'Liberation Sans', sans-serif;">Sorteringsdato</div>
<svg class="a" style="left:651px;top:275px;" width="10" height="15" viewBox="0 0 10 15"><path d="M5 1 L5 13 M1 9 L5 13.3 L9 9" fill="none" stroke="#2a2a2a" stroke-width="1.6"/></svg>
<div class="a t" style="left:676px;top:276px;font-size:11.9px;color:#333;font-family:'Liberation Sans', sans-serif;">Fra</div>
<div class="a t" style="left:800.7px;top:276px;font-size:11.8px;color:#333;font-family:'Liberation Sans', sans-serif;">Sagsnummer</div>
<div class="a" style="left:254px;top:296px;width:666px;height:28px;background:#a7cdef;"></div>
<svg class="a" style="left:291px;top:303px;" width="13" height="15" viewBox="0 0 13 15"><path d="M0.65 0.65 L8.6 0.65 L11.7 3.8 L11.7 13.7 L0.65 13.7 Z" fill="none" stroke="#777" stroke-width="1.3"/><path d="M8.4 0.65 L8.4 4 L11.7 4" fill="none" stroke="#777" stroke-width="1"/></svg>
<svg class="a" style="left:333px;top:303px;" width="16" height="15" viewBox="0 0 16 15"><circle cx="8" cy="7.5" r="6.8" fill="none" stroke="#7a7a7a" stroke-width="1"/><circle cx="8" cy="4.3" r="1.1" fill="#7a7a7a"/><path d="M6.3 6.5 L8.6 6.5 L8.6 11 M6.3 11.2 L10.2 11.2" fill="none" stroke="#7a7a7a" stroke-width="1.3"/></svg>
<div class="a t" style="left:357.8px;top:304px;font-size:12.1px;color:#1e1e1e;font-family:'Liberation Sans', sans-serif;font-weight:bold;">Sagsimport afsluttet</div>
<div class="a t" style="left:522.3px;top:304px;font-size:12.25px;color:#1e1e1e;font-family:'Liberation Sans', sans-serif;font-weight:bold;">19-01-2024 13:51</div>
<div class="a t" style="left:676px;top:304px;font-size:12.1px;color:#1e1e1e;font-family:'Liberation Sans', sans-serif;font-weight:bold;">Isak Thorsen</div>
<svg class="a" style="left:291px;top:331px;" width="13" height="15" viewBox="0 0 13 15"><path d="M0.65 0.65 L8.6 0.65 L11.7 3.8 L11.7 13.7 L0.65 13.7 Z" fill="none" stroke="#777" stroke-width="1.3"/><path d="M8.4 0.65 L8.4 4 L11.7 4" fill="none" stroke="#777" stroke-width="1"/></svg>
<svg class="a" style="left:315px;top:331px;" width="8" height="16" viewBox="0 0 8 16"><path d="M5.5 4 L5.5 11.5 Q5.5 13.5 4 13.5 Q2.5 13.5 2.5 11.5 L2.5 3 Q2.5 1 4 1 L4.5 1 Q6.5 1 6.5 3 L6.5 12 Q6.5 14.5 4 14.5 Q1.5 14.5 1.5 12 L1.5 5" fill="none" stroke="#8a8a8a" stroke-width="1"/></svg>
<svg class="a" style="left:333px;top:331px;" width="16" height="14" viewBox="0 0 16 14"><path d="M10.5 10.2 Q14.8 9 14.8 5.8 Q14.8 0.8 8 0.8 Q1.2 0.8 1.2 5.8 Q1.2 10.6 8 10.6 L9.5 10.6 L8 13" fill="none" stroke="#8a8a8a" stroke-width="1" stroke-linejoin="round"/></svg>
<div class="a t" style="left:357.8px;top:332px;font-size:11.8px;color:#1e1e1e;font-family:'Liberation Sans', sans-serif;">Sagseksport afsluttet</div>
<div class="a t" style="left:522.3px;top:332px;font-size:11.8px;color:#1e1e1e;font-family:'Liberation Sans', sans-serif;">19-01-2024 13:45</div>
<div class="a t" style="left:676px;top:332px;font-size:11.8px;color:#1e1e1e;font-family:'Liberation Sans', sans-serif;">Irene Tangmose</div>
<svg class="a" style="left:291px;top:359px;" width="13" height="15" viewBox="0 0 13 15"><path d="M0.65 0.65 L8.6 0.65 L11.7 3.8 L11.7 13.7 L0.65 13.7 Z" fill="none" stroke="#777" stroke-width="1.3"/><path d="M8.4 0.65 L8.4 4 L11.7 4" fill="none" stroke="#777" stroke-width="1"/></svg>
<svg class="a" style="left:315px;top:359px;" width="8" height="16" viewBox="0 0 8 16"><path d="M5.5 4 L5.5 11.5 Q5.5 13.5 4 13.5 Q2.5 13.5 2.5 11.5 L2.5 3 Q2.5 1 4 1 L4.5 1 Q6.5 1 6.5 3 L6.5 12 Q6.5 14.5 4 14.5 Q1.5 14.5 1.5 12 L1.5 5" fill="none" stroke="#8a8a8a" stroke-width="1"/></svg>
<svg class="a" style="left:335px;top:358px;" width="15" height="16" viewBox="0 0 15 16"><rect x="2.5" y="3" width="9.5" height="12.2" fill="#fff" stroke="#6a6a6a" stroke-width="1"/><path d="M0.5 4.5 L3 4.5 M0.5 7 L3 7 M0.5 9.5 L3 9.5 M0.5 12 L3 12" stroke="#6a6a6a" stroke-width="0.9"/><path d="M4.5 7 L10.5 7 M4.5 9.3 L10.5 9.3 M4.5 11.6 L10.5 11.6" stroke="#3f7cc8" stroke-width="1.1"/><circle cx="11" cy="3.4" r="3.2" fill="#3f7cc8"/></svg>
<div class="a t" style="left:357.8px;top:360px;font-size:11.8px;color:#1e1e1e;font-family:'Liberation Sans', sans-serif;">Opgraderingsrapport</div>
<div class="a t" style="left:522.3px;top:360px;font-size:11.8px;color:#1e1e1e;font-family:'Liberation Sans', sans-serif;">19-01-2024 13:30</div>
<div class="a t" style="left:676px;top:360px;font-size:11.8px;color:#1e1e1e;font-family:'Liberation Sans', sans-serif;">Klaus Salomon</div>
<div class="a t" style="left:800.7px;top:360px;font-size:11.8px;color:#1e1e1e;font-family:'Liberation Sans', sans-serif;">2023 - 2</div>
<div class="a" style="left:930px;top:268px;width:16px;height:379px;background:#f2f2f2;"></div>
<div class="a" style="left:930px;top:268px;width:16px;height:16px;background:#f7f7f7;box-sizing:border-box;border:1px solid #c8c8c8;"></div>
<svg class="a" style="left:933px;top:272px;" width="10" height="7" viewBox="0 0 10 7"><path d="M1 6 L9 6 L5 1.5 Z" fill="#d6d6d6"/></svg>
<div class="a" style="left:930px;top:631px;width:16px;height:16px;background:#f7f7f7;box-sizing:border-box;border:1px solid #c8c8c8;"></div>
<svg class="a" style="left:933px;top:635px;" width="10" height="7" viewBox="0 0 10 7"><path d="M1 1 L9 1 L5 5.5 Z" fill="#d6d6d6"/></svg>
<div class="a" style="left:254px;top:647px;width:676px;height:16px;background:#f2f2f2;"></div>
<div class="a" style="left:254px;top:647px;width:16px;height:16px;background:#f7f7f7;box-sizing:border-box;border:1px solid #b4b4b4;"></div>
<svg class="a" style="left:257px;top:650px;" width="10" height="10" viewBox="0 0 10 10"><path d="M7 1 L7 9 L2.5 5 Z" fill="#c4c4c4"/></svg>
<div class="a" style="left:914px;top:647px;width:16px;height:16px;background:#f7f7f7;box-sizing:border-box;border:1px solid #b4b4b4;"></div>
<svg class="a" style="left:917px;top:650px;" width="10" height="10" viewBox="0 0 10 10"><path d="M3 1 L3 9 L7.5 5 Z" fill="#c4c4c4"/></svg>
<div class="a" style="left:953px;top:192px;width:321px;height:36px;background:#f6f6f6;"></div>
<div class="a" style="left:953px;top:228px;width:321px;height:441px;background:#ffffff;"></div>
<div class="a t" style="left:964.9px;top:201px;font-size:15.3px;color:#333;font-family:'Liberation Sans', sans-serif;font-weight:bold;">Akt</div>
<div class="a" style="left:965px;top:225.5px;width:25px;height:2.5px;background:#1f62c4;"></div>
<div class="a t" style="left:1008.6px;top:201px;font-size:15.0px;color:#444;font-family:'Liberation Sans', sans-serif;">Parter</div>
<svg class="a" style="left:1257px;top:196px;" width="13" height="13" viewBox="0 0 13 13"><path d="M0.5 8.5 L0.5 0.5 L12.5 0.5 L12.5 12.5 L5 12.5" fill="#fff" stroke="#3f7cc8" stroke-width="1"/><rect x="0.6" y="8.6" width="3.4" height="3.4" fill="#fff" stroke="#777" stroke-width="1.2"/><path d="M4.5 8.5 L8.5 4.5" stroke="#777" stroke-width="1.6"/><path d="M5 3.2 L9.8 3.2 L9.8 8 Z" fill="#777"/></svg>
<div class="a t" style="left:965.5px;top:244px;font-size:16.9px;color:#636363;font-family:'Liberation Sans', sans-serif;">Sagsimport afsluttet</div>
<div class="a t" style="left:965.5px;top:272px;font-size:11.6px;color:#333;font-family:'Liberation Sans', sans-serif;">Isak Thorsen (Sagsbehandler, IT Kontor)</div>
<div class="a" style="left:953px;top:298px;width:321px;height:1px;background:#d8d8d8;"></div>
<div class="a" style="left:953px;top:299px;width:107px;height:28px;background:#a7cdef;"></div>
<div class="a" style="left:953px;top:327px;width:321px;height:1px;background:#d4d4d4;"></div>
<svg class="a" style="left:960px;top:305px;" width="14" height="16" viewBox="0 0 14 16"><path d="M0.7 0.7 L8.2 0.7 L12.3 4.8 L12.3 14.7 L0.7 14.7 Z" fill="none" stroke="#666" stroke-width="1.2"/><path d="M8 0.7 L8 5 L12.3 5" fill="none" stroke="#666" stroke-width="1"/></svg>
<div class="a t" style="left:980.8px;top:307px;font-size:12.4px;color:#222;font-family:'Liberation Sans', sans-serif;">Aktdokument</div>
<div class="a t" style="left:978.9px;top:342px;font-size:15.36px;color:#222;font-family:'Liberation Serif', serif;">Sagsimporten oprettede følgende sager:</div>
<svg class="a" style="left:1001px;top:380px;" width="8" height="8" viewBox="0 0 8 8"><circle cx="4" cy="4" r="2.7" fill="#222"/></svg>
<div class="a t" style="left:1017.2px;top:374px;font-size:15.4px;color:#2a20e0;font-family:'Liberation Serif', serif;text-decoration:underline;">2022 - 9</div>
<div class="a t" style="left:1072.4px;top:374px;font-size:15.4px;color:#222;font-family:'Liberation Serif', serif;">Borgersvar</div>
<div class="a" style="left:1px;top:669px;width:1273px;height:1px;background:#b4b0a8;"></div>
<div class="a" style="left:0px;top:670px;width:1275px;height:20px;background:#216bca;"></div>
<div class="a" style="left:0px;top:689px;width:1275px;height:1px;background:#1b5ab4;"></div>
<div class="a t" style="left:8px;top:674px;font-size:11.9px;color:#ffffff;font-family:'Liberation Sans', sans-serif;">7 resultater</div>
<div class="a t" style="left:1141.4px;top:675px;font-size:11.4px;color:#ffffff;font-family:'Liberation Sans', sans-serif;">Sag:</div>
<div class="a" style="left:1167.5px;top:681px;width:3.5px;height:1px;background:#ffffff;"></div>
<div class="a" style="left:1172px;top:681px;width:3.5px;height:1px;background:#ffffff;"></div>
<div class="a" style="left:1176.5px;top:681px;width:3.5px;height:1px;background:#ffffff;"></div>
<div class="a" style="left:1181px;top:681px;width:3.5px;height:1px;background:#ffffff;"></div>
<div class="a" style="left:1190px;top:681px;width:3.5px;height:1px;background:#ffffff;"></div>
<div class="a" style="left:1198.5px;top:681px;width:3.5px;height:1px;background:#ffffff;"></div>
<div class="a" style="left:1203px;top:681px;width:3.5px;height:1px;background:#ffffff;"></div>
<div class="a" style="left:1207.5px;top:681px;width:3.5px;height:1px;background:#ffffff;"></div>
<div class="a" style="left:1212px;top:681px;width:3.5px;height:1px;background:#ffffff;"></div>
<svg class="a" style="left:1220px;top:671px;" width="16" height="17" viewBox="0 0 16 17"><circle cx="7.5" cy="9.5" r="5.8" fill="none" stroke="#fff" stroke-width="1.6"/><path d="M5 1.6 L10 1.6 M7.5 1.6 L7.5 3.7 M7.5 9.8 L7.5 6" stroke="#fff" stroke-width="1.6"/><path d="M12 3.5 L13.5 5" stroke="#fff" stroke-width="1.3"/></svg>
<svg class="a" style="left:1237px;top:673px;" width="14" height="14" viewBox="0 0 14 14"><path d="M1.3 1.3 L7 1.3 L13 7.3 L7.3 13 L1.3 7 Z" fill="none" stroke="#fff" stroke-width="1.4" stroke-linejoin="round"/><circle cx="4.3" cy="4.3" r="1.1" fill="#fff"/></svg>
</body></html>
